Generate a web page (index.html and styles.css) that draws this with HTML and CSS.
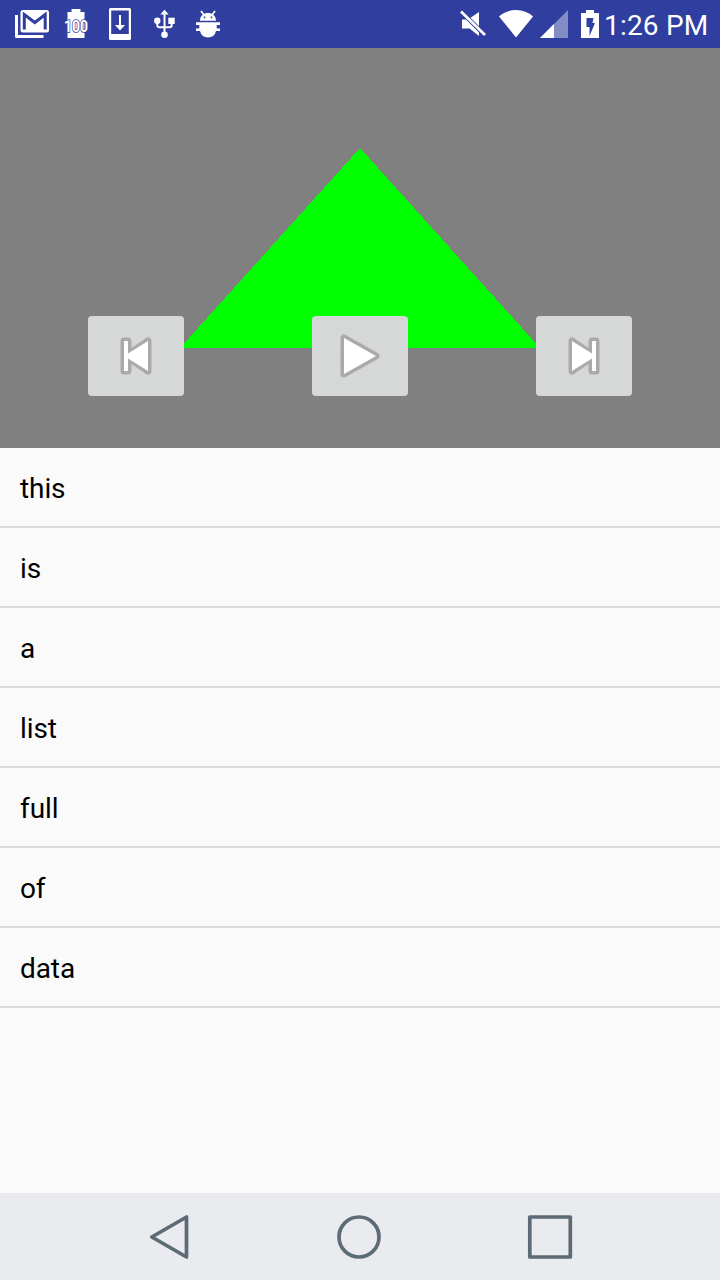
FILE: index.html
```html
<!DOCTYPE html>
<html lang="en">
<head>
<meta charset="utf-8">
<title>Player</title>
<link rel="stylesheet" href="styles.css">
</head>
<body>
<div class="screen">
  <header class="status">
    <div class="notifications">
      <svg width="44" height="48" viewBox="10 0 44 48">
        <path d="M16.500 15V36.500H43.500" fill="none" stroke="#fff" stroke-width="3" stroke-linejoin="round"/>
        <rect x="20.500" y="10" width="28.500" height="22.500" rx="2.500" fill="#fff"/>
        <path d="M24.300 29.500V14.500L34.800 22.500L45.200 14.500V29.500" fill="none" stroke="#303f9f" stroke-width="3"/>
      </svg>
      <svg width="44" height="48" viewBox="54 0 44 48">
        <path d="M71.500 9H80.500V12H84.500V38H67.500V12H71.500Z" fill="#fff"/>
        <text class="level" x="64" y="32.200" textLength="24" lengthAdjust="spacingAndGlyphs">100</text>
      </svg>
      <svg width="44" height="48" viewBox="98 0 44 48">
        <path fill-rule="evenodd" d="M110.500 8H129.500Q131 8 131 9.500V38.500Q131 40 129.500 40H110.500Q109 40 109 38.500V9.500Q109 8 110.500 8ZM111.200 10.500V34H128.800V10.500Z" fill="#fff"/>
        <path d="M119 15H121V25H125L120 30.500L115 25H119Z" fill="#fff"/>
      </svg>
      <svg width="44" height="48" viewBox="142 0 44 48">
        <path d="M164.500 13V34M157.300 20V25Q157.300 27.200 159.500 27.200H169.500Q171.700 27.200 171.700 25V21" fill="none" stroke="#fff" stroke-width="2"/>
        <path d="M160.300 14.500L164.500 9.800L168.700 14.500Z" fill="#fff"/>
        <circle cx="157.300" cy="20.700" r="3.200" fill="#fff"/>
        <circle cx="164.500" cy="34.700" r="3.300" fill="#fff"/>
        <rect x="168.300" y="17.700" width="6.400" height="6.300" fill="#fff"/>
      </svg>
      <svg width="44" height="48" viewBox="186 0 44 48">
        <path d="M201 11L204 15M215 11L212 15" stroke="#fff" stroke-width="1.700"/>
        <path fill-rule="evenodd" d="M200 20.800C200 10.500 216 10.500 216 20.800ZM203.700 16.500V18.300H205.300V16.500ZM210.700 16.500V18.300H212.300V16.500Z" fill="#fff"/>
        <path d="M196 22.300H220V25H216.700V28.500H220V31H216Q214.500 37.500 208 37.500Q201.500 37.500 200 31H196V28.500H199.300V25H196Z" fill="#fff"/>
      </svg>
    </div>
    <div class="system">
      <svg width="36" height="48" viewBox="456 0 36 48">
        <path d="M462 19.500H466L479 32.500V36L469.500 28.500H462Z" fill="#fff"/>
        <path d="M479 12V28L469.500 18.500Z" fill="#fff"/>
        <path d="M462 10.500L486 34" stroke="#303f9f" stroke-width="1.500"/>
        <path d="M461 11.500L485 35" stroke="#fff" stroke-width="2.700"/>
      </svg>
      <svg width="44" height="48" viewBox="492 0 44 48">
        <path d="M499 16.500Q506 10 516 10Q526 10 533 16.500L516 37.500Z" fill="#fff"/>
      </svg>
      <svg width="40" height="48" viewBox="536 0 40 48">
        <path d="M568 10V38H540Z" fill="#838cc5"/>
        <path d="M554 24V38H540Z" fill="#fff"/>
      </svg>
      <svg width="28" height="48" viewBox="576 0 28 48">
        <path d="M586 10H594V13H599V38H581V13H586Z" fill="#fff"/>
        <path d="M586.500 18H593.500L592.500 23H595L589.500 36V27H586.500Z" fill="#303f9f"/>
      </svg>
      <span class="clock">1:26 PM</span>
    </div>
  </header>

  <section class="stage">
    <svg class="shape" width="720" height="400" viewBox="0 0 720 400">
      <path d="M360 100L540 300H180Z" fill="#0f0" shape-rendering="crispEdges"/>
    </svg>
    <div class="controls">
      <button class="control" aria-label="Previous">
        <svg width="96" height="80" viewBox="88 316 96 80">
          <path class="edge" d="M124 341H128V371H124ZM148 341V371L126 356Z"/>
          <path class="face" d="M124 341H128V371H124Z"/>
          <path class="face" d="M148 341V371L124 356Z"/>
        </svg>
      </button>
      <button class="control" aria-label="Play">
        <svg width="96" height="80" viewBox="312 316 96 80">
          <path class="edge" d="M344 338V374L376 356Z"/>
          <path class="face" d="M344 338V374L376 356Z"/>
        </svg>
      </button>
      <button class="control" aria-label="Next">
        <svg width="96" height="80" viewBox="536 316 96 80">
          <path class="edge" d="M592 341H596V371H592ZM572 341V371L594 356Z"/>
          <path class="face" d="M592 341H596V371H592Z"/>
          <path class="face" d="M572 341V371L596 356Z"/>
        </svg>
      </button>
    </div>
  </section>

  <ul class="list">
    <li class="row">this</li>
    <li class="row">is</li>
    <li class="row">a</li>
    <li class="row">list</li>
    <li class="row">full</li>
    <li class="row">of</li>
    <li class="row">data</li>
  </ul>

  <nav class="navbar">
    <svg width="44" height="48" viewBox="147 1213 44 48"><path class="nav-line" d="M186.500 1217V1257L151.800 1237Z"/></svg>
    <svg width="48" height="48" viewBox="335 1213 48 48"><circle class="nav-line" cx="359" cy="1237" r="20"/></svg>
    <svg width="48" height="48" viewBox="526 1213 48 48"><rect class="nav-line" x="529.800" y="1217" width="40.500" height="40"/></svg>
  </nav>
</div>
</body>
</html>
```
FILE: styles.css
```css
* { box-sizing: border-box; }

body {
  margin: 0;
  font-family: Roboto, "Noto Sans", sans-serif;
}

svg { display: block; flex: none; }

.screen {
  width: 720px;
  height: 1280px;
  display: flex;
  flex-direction: column;
  background: #fafafa;
  overflow: hidden;
}

.status {
  height: 48px;
  display: flex;
  justify-content: space-between;
  padding: 0 0 0 10px;
  background: #303f9f;
  color: #fff;
}

.notifications, .system { display: flex; }

.system { width: 264px; }

.clock {
  font-size: 28px;
  letter-spacing: 0.2px;
  line-height: 52px;
  height: 48px;
  white-space: nowrap;
}

.level {
  font-family: Roboto, sans-serif;
  font-size: 17px;
  font-weight: 700;
  fill: #fff;
  stroke: #303f9f;
  stroke-width: 1.6px;
  paint-order: stroke;
}

.stage {
  position: relative;
  height: 400px;
  display: flex;
  align-items: flex-end;
  padding: 0 88px 52px;
  background: #808080;
}

.shape {
  position: absolute;
  top: 0;
  left: 0;
}

.controls {
  position: relative;
  display: flex;
  flex: 1;
  justify-content: space-between;
}

.control {
  width: 96px;
  height: 80px;
  padding: 0;
  border: 0;
  border-radius: 4px;
  background: #d6d7d7;
}

.edge {
  fill: #aaa;
  stroke: #aaa;
  stroke-width: 7px;
  stroke-linejoin: round;
}

.face { fill: #fff; }

.list {
  flex: 1;
  margin: 0;
  padding: 0;
  list-style: none;
}

.row {
  height: 80px;
  padding-left: 20px;
  border-bottom: 2px solid #dadada;
  font-size: 28px;
  letter-spacing: -0.1px;
  line-height: 81px;
  color: #000;
}

.navbar {
  height: 87px;
  display: flex;
  align-items: center;
  justify-content: space-between;
  padding: 1px 146px 0 147px;
  background: #e9ebee;
}

.nav-line {
  fill: none;
  stroke: #5c6b75;
  stroke-width: 3.7px;
  stroke-linejoin: round;
}
```
